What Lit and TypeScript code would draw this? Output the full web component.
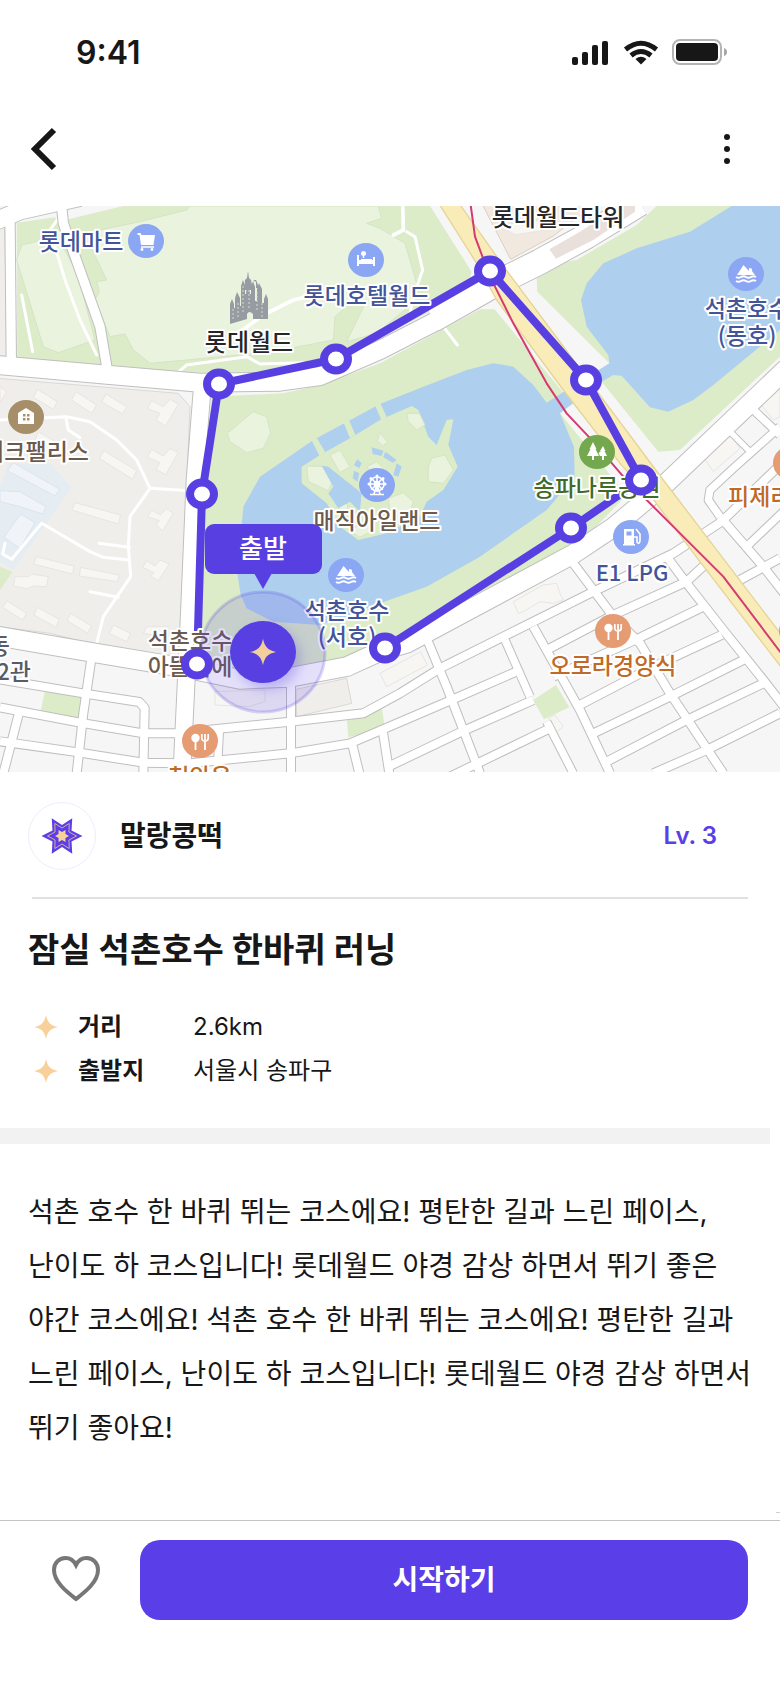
import { LitElement, html, svg, css } from "lit";
import { customElement, property } from "lit/decorators.js";

type Road = [points: string, width: number];
type Label = { x: number; y: number; text: string; kind: string; anchor?: string };
type Pin = { x: number; y: number; kind: string; icon: string };

/* Terrain is drafted on a 3x grid and scaled down by the map group. */
const GREENS = [
  "50,68 165,52 200,130 300,420 318,500 52,472",
  "205,58 370,18 1290,18 1415,215 1405,250 1380,290 1140,412 1010,480 880,512 650,520 540,515 335,496 300,380 205,110",
  "635,590 850,580 960,556 1140,490 1440,328 1484,328 1700,590 1680,640 1880,885 1740,1030 1300,1290 1140,1360 1000,1400 840,1420 595,1430 612,840",
  "1610,235 1670,190 1730,180 1910,75 1970,18 2340,18 2340,470 2040,750 1975,755 1805,545 1828,490 1612,275",
];

const LIGHT_GREENS = [
  "50,180 65,135 150,115 195,150 235,230 285,420 175,458 130,440",
  "570,18 560,30 420,65 300,90 255,105 320,240 290,245 298,275 285,300 330,410 375,402 400,450 450,490 560,480 820,455 1000,420 1005,350 1040,320 1100,300 1040,425 1130,400 1250,300 1250,250 1215,130 1140,85 1100,70 1145,55 1135,18",
  "760,635 800,650 812,700 790,745 740,758 690,725 682,700",
];

const LAKES = [
  "2195,18 2070,95 1910,145 1810,190 1760,250 1743,300 1760,380 1825,465 1828,490 1700,570 1640,608 1600,555 1540,500 1480,490 1400,510 1270,560 1140,612 940,720 780,830 730,920 712,1120 722,1185 740,1225 820,1265 960,1275 1040,1250 1140,1210 1280,1160 1440,1070 1640,930 1724,830 1722,740 1680,640 1805,545 1840,525 1865,527 1950,622 2005,635 2080,600 2140,555 2340,390 2340,18",
];

const ISLANDS = [
  "905,800 960,765 1050,715 1140,660 1235,618 1255,630 1285,710 1310,735 1340,660 1360,658 1345,735 1373,800 1330,870 1280,905 1260,950 1160,1000 1075,1020 1020,980 980,910 905,850",
  "930,712 945,705 975,755 960,770",
  "1030,665 1045,655 1066,705 1050,715",
  "1125,615 1140,608 1160,650 1145,662",
];

const ISLAND_WATER = [
  "965,797 985,800 1085,880 1080,935 1050,905 1015,925 985,880 1000,860",
  "1115,742 1150,752 1145,768 1118,762",
  "1156,755 1190,780 1178,788 1150,772",
  "1072,778 1085,790 1078,805 1062,795",
  "1062,812 1078,820 1072,845 1058,835",
  "1190,790 1205,800 1195,830 1180,825",
];

const ISLAND_PATCHES = [
  "920,798 980,800 995,850 985,872 925,845",
  "990,765 1020,750 1050,800 1020,818",
  "1140,698 1162,725 1150,738 1132,722",
  "1220,640 1258,640 1275,675 1250,690 1225,665",
  "1295,775 1335,765 1360,810 1330,850 1285,845 1285,800",
  "1100,800 1130,785 1150,805 1130,830",
  "1015,915 1040,905 1045,935 1020,955",
  "1165,895 1210,878 1240,905 1225,950 1170,940",
  "1045,990 1110,965 1120,990 1080,1012",
];

const HOUSES = [
  "0,560 20,575 0,608",
  "112,568 172,605 160,628 100,592",
  "228,575 290,615 275,640 215,600",
  "318,582 380,620 368,642 305,606",
  "455,602 490,620 510,598 535,612 497,678 468,660 480,640 442,625",
  "312,752 410,812 398,838 298,775",
  "115,695 175,730 165,750 105,722",
  "455,748 490,768 510,745 535,758 497,824 468,808 480,788 442,772",
  "225,908 362,945 355,972 215,930",
  "455,930 482,945 498,925 520,940 488,992 468,975 478,962 442,950",
  "110,1070 222,1098 218,1122 100,1092",
  "242,1102 358,1125 352,1145 238,1128",
  "440,1082 465,1098 480,1080 508,1092 475,1142 452,1128 462,1118 428,1102",
  "45,1130 85,1130 95,1122 145,1130 140,1160 100,1158 80,1166 40,1158",
  "20,1202 80,1240 68,1260 8,1222",
  "112,1222 178,1258 168,1282 102,1245",
  "212,1240 275,1278 262,1300 202,1262",
  "340,1275 392,1300 380,1325 328,1300",
  "440,1280 505,1280 495,1310 430,1300",
];

const STRUCTURES = [
  "645,1475 795,1470 795,1505 745,1520 645,1515",
  "1140,1420 1262,1355 1282,1395 1160,1460",
  "1540,1205 1630,1155 1670,1150 1680,1180 1690,1200 1660,1210 1620,1205 1570,1235 1555,1240",
  "1645,1555 1665,1545 1690,1580 1668,1598",
  "2110,770 2190,705 2220,745 2140,815",
  "2280,610 2340,560 2340,650 2320,660",
];

const PARKS = [
  "135,1472 245,1490 238,1556 122,1534",
  "1040,1552 1145,1520 1155,1585 1045,1612",
  "1600,1500 1668,1455 1708,1522 1632,1558",
  "0,1100 38,1115 0,1170",
];

const STREETS: Road[] = [
  ["30,60 34,490", 28],
  ["183,0 190,70 300,380 322,510", 28],
  ["-10,62 60,32 240,-8", 52],
  ["0,1438 250,1480 418,1506 434,1524 430,1720", 24],
  ["0,1522 240,1568 430,1600 540,1600", 24],
  ["0,1624 220,1655 430,1688 540,1690", 24],
  ["275,1370 250,1540 230,1720", 24],
  ["58,1535 10,1720", 24],
  ["570,1595 870,1565 1090,1540 1200,1480 1320,1405 1590,1270 1790,1170 2020,1060 2165,965 2340,795", 24],
  ["570,1690 870,1660 1050,1630 1140,1592 1350,1502 1560,1410", 24],
  ["873,1450 873,1720", 24],
  ["658,1590 652,1720", 22],
  ["1056,1630 1078,1720", 24],
  ["1148,1590 1168,1720", 24],
  ["1165,1700 1385,1595 1600,1500", 24],
  ["1340,1735 1660,1580", 24],
  ["1282,1320 1340,1460 1440,1720", 24],
  ["1515,1320 1590,1490", 22],
  ["1640,1565 1720,1720", 22],
  ["1600,1280 1740,1530 1830,1720", 24],
  ["1720,1090 1840,1250 1920,1330 2010,1480 2170,1720", 24],
  ["1640,1350 1840,1245 2060,1145 2130,1080", 24],
  ["1660,1430 1905,1320 2110,1220", 24],
  ["1730,1520 1960,1400 2165,1305", 24],
  ["1770,1605 2010,1490 2230,1380", 24],
  ["1810,1690 2060,1560 2290,1450", 24],
  ["1960,1720 2120,1650 2340,1540", 24],
  ["2000,1070 2060,1150 2170,1290 2290,1440 2360,1530", 24],
  ["2220,1140 2340,1075", 24],
  ["2160,950 2290,1100 2360,1190", 24],
  ["2240,1040 2360,925", 22],
  ["2160,950 2125,900 2130,870 2200,805 2340,680", 22],
  ["2185,690 2250,755", 16],
  ["2250,620 2340,705", 22],
];

const AVENUES: Road[] = [
  ["-20,494 330,525 600,548 840,545 960,528 1140,450 1315,360 1490,250 1620,185 1760,108 1920,10", 54],
  ["1300,358 1490,250 1620,185 1760,108 1920,10", 74],
  ["607,560 585,840 565,1310 545,1730", 50],
  ["-10,1308 280,1358 560,1405 720,1438 870,1432 1040,1400 1150,1350 1220,1330 1720,1062 1840,982 2000,848 2360,505", 56],
];

const PATHS: Road[] = [
  ["150,90 195,240 240,360 290,465", 9],
  ["150,90 175,55", 9],
  ["65,285 98,455", 9],
  ["530,520 560,495 740,470 780,492 910,488", 9],
  ["720,395 790,345 880,300 920,290", 11],
  ["1208,0 1210,90 1180,105", 11],
  ["1220,95 1245,110 1268,210 1240,290 1230,340", 9],
  ["1330,380 1372,435", 9],
  ["0,660 200,650 270,665 350,720 410,780 450,865 390,950 385,1040 392,1130 310,1250 285,1350", 9],
  ["198,655 205,690 240,713", 9],
  ["450,865 570,872", 9],
  ["298,1030 388,1042", 9],
  ["270,1175 355,1192", 9],
  ["388,1080 310,1072 270,1055 125,970 35,1078 8,1062 15,1030", 9],
];

const PINS: Pin[] = [
  { x: 146, y: 241, kind: "blue", icon: "cart" },
  { x: 366, y: 260, kind: "blue", icon: "bed" },
  { x: 26, y: 417, kind: "brown", icon: "house" },
  { x: 377, y: 485, kind: "blue", icon: "wheel" },
  { x: 746, y: 274, kind: "blue", icon: "lake" },
  { x: 597, y: 452, kind: "green", icon: "trees" },
  { x: 346, y: 575, kind: "blue", icon: "lake" },
  { x: 200, y: 741, kind: "orange", icon: "food" },
  { x: 613, y: 631, kind: "orange", icon: "food" },
  { x: 631, y: 537, kind: "blue", icon: "gas" },
  { x: 791, y: 463, kind: "orange", icon: "food" },
  { x: 797, y: 631, kind: "blue", icon: "cart" },
];

const LABELS: Label[] = [
  { x: 81, y: 250, text: "롯데마트", kind: "navy" },
  { x: 249, y: 351, text: "롯데월드", kind: "dark" },
  { x: 367, y: 304, text: "롯데호텔월드", kind: "navy" },
  { x: 558, y: 226, text: "롯데월드타워", kind: "dark" },
  { x: 747, y: 317, text: "석촌호수", kind: "navy" },
  { x: 747, y: 344, text: "(동호)", kind: "navy" },
  { x: 89, y: 460, text: "레이크팰리스", kind: "earth", anchor: "end" },
  { x: 377, y: 529, text: "매직아일랜드", kind: "earth" },
  { x: 347, y: 619, text: "석촌호수", kind: "navy" },
  { x: 347, y: 645, text: "(서호)", kind: "navy" },
  { x: 190, y: 649, text: "석촌호수", kind: "earth" },
  { x: 190, y: 675, text: "아뜰리에", kind: "earth" },
  { x: 597, y: 496, text: "송파나루공원", kind: "forest" },
  { x: 728, y: 505, text: "피제리아", kind: "rust", anchor: "start" },
  { x: 632, y: 581, text: "E1 LPG", kind: "navy latin" },
  { x: 613, y: 674, text: "오로라경양식", kind: "rust" },
  { x: 200, y: 785, text: "천안옥", kind: "rust" },
  { x: 10, y: 654, text: "동", kind: "slate", anchor: "end" },
  { x: 31, y: 680, text: "2관", kind: "slate", anchor: "end" },
];

const ROUTE: [number, number][] = [
  [385, 648], [571, 528], [641, 480], [586, 380], [490, 271],
  [336, 359], [219, 384], [202, 494], [197, 664],
];

const ICONS: Record<string, unknown> = {
  cart: svg`<path d="M-8.500-8h3l1 2H9L7.500 4H-5L-6.500-6h-2z" fill="#fff"/><path d="M-5 6H8" stroke="#fff" stroke-width="1.500"/><circle cx="-4" cy="8.500" r="1.400" fill="#fff"/><circle cx="6" cy="8.500" r="1.400" fill="#fff"/>`,
  bed: svg`<path d="M-9-5h2v5H7v-3h2V6H7V4H-7v2h-2zM-5-1H6v2H-5z" fill="#fff"/><path d="M-2.500-2V-6" stroke="#fff" stroke-width="1.400"/><circle cx="-2.500" cy="-6.500" r="2.500" fill="#fff"/>`,
  house: svg`<path d="M-8 7V-4L0-9l8 5V7z" fill="#fff"/><path d="M-3-3h2.500v2.500H-3zM1-3h2.500v2.500H1zM-3 1h2.500v2.500H-3zM1 1h2.500v2.500H1z" fill="#a58e68"/>`,
  wheel: svg`<g fill="none" stroke="#fff" stroke-width="1.600"><circle cy="-1" r="7"/><circle cy="-1" r="2.500"/><path d="M0-9V7M-8-1H8M-5.700-6.700 5.700 4.700M5.700-6.700-5.700 4.700M-3 9 0-1 3 9M-7 9.500H7"/></g><g fill="#fff"><circle cy="-9" r="1.500"/><circle cx="8" cy="-1" r="1.500"/><circle cx="-8" cy="-1" r="1.500"/><circle cx="6" cy="-6.500" r="1.500"/><circle cx="-6" cy="-6.500" r="1.500"/></g>`,
  lake: svg`<path d="M-9 1-2.500-9 3-3V-6q4 0 3 3l3 4z" fill="#fff"/><path d="M-10 3q2.500 1.500 5 0t5 0 5 0 5 0M-10 7q2.500 1.500 5 0t5 0 5 0 5 0" fill="none" stroke="#fff" stroke-width="2"/>`,
  trees: svg`<path d="M-4-10-.500-3h-1L2 4h-5v4h-2V4h-5l3.500-7h-1zM6-6l2.500 5h-1L10 4H7v4H5V4H3L1.500 1 4-1h-1z" fill="#fff"/>`,
  food: svg`<circle cx="-4.500" cy="-3" r="4.200" fill="#fff"/><path d="M-4.500 0v9M5 0v9" stroke="#fff" stroke-width="1.800"/><path d="M1.800-7v4q0 3 3.200 3t3.200-3v-4M5-7v6" fill="none" stroke="#fff" stroke-width="1.700"/>`,
  gas: svg`<path d="M-7-8H3V7h1v1.500H-8V7h1zM-4.500-5.500v4H.500v-4z" fill="#fff" fill-rule="evenodd"/><path d="M5-8l4 5v7q-1 4-3 1V0H3" fill="none" stroke="#fff" stroke-width="1.600"/>`,
};

const sparkle = "M0-12C1.500-4.500 4.500-1.500 12 0C4.500 1.500 1.500 4.500 0 12C-1.500 4.500-4.500 1.500-12 0C-4.500-1.500-1.500-4.500 0-12Z";

const starPoints = (outer: number, inner: number) =>
  Array.from({ length: 12 }, (_, i) => {
    const r = i % 2 ? inner : outer;
    const a = (i * Math.PI) / 6;
    return `${(r * Math.cos(a)).toFixed(2)},${(r * Math.sin(a)).toFixed(2)}`;
  }).join(" ");

const polys = (list: string[], cls: string) => list.map((p) => svg`<polygon class=${cls} points=${p}></polygon>`);

const roads = (list: Road[], casing: number, cls: string) =>
  list.map(([p, w]) => svg`<polyline class=${cls} points=${p} stroke-width=${w + casing}></polyline>`);

@customElement("course-map")
export class CourseMap extends LitElement {
  static styles = css`
    :host { display: block; }
    svg { display: block; width: 100%; height: auto; }
    .ground { fill: #f6f6f6; }
    .green { fill: #dcebc8; }
    .light { fill: #e9f3dd; stroke: #d6e3c6; stroke-width: 3; }
    .water { fill: #aed0ee; }
    .estate { fill: #efeeeb; stroke: #dcd8d2; stroke-width: 3; }
    .school { fill: #e5edf3; }
    .wing { fill: #f0f4f9; stroke: #dbe3ec; stroke-width: 3; }
    .house { fill: #f7f6f3; stroke: #e8e5e0; stroke-width: 3; }
    .mall { fill: #f1e9df; stroke: #dccfc2; stroke-width: 3; }
    .annex { fill: #e9e0db; }
    .highway { fill: #faecb8; stroke: #e5d498; stroke-width: 4; }
    .casing, .road, .metro { fill: none; stroke-linejoin: round; }
    .casing { stroke: #bfbfbf; }
    .road { stroke: #fff; }
    .path { fill: none; stroke: #fff; stroke-linejoin: round; stroke-linecap: round; }
    .metro { stroke: #d53a70; stroke-width: 6; }
    .castle { fill: #979ba2; }
    .window { fill: none; stroke: #d5dbd3; stroke-width: 1; stroke-dasharray: 2 2; }
    .route { fill: none; stroke: #573fe2; stroke-width: 8; stroke-linejoin: round; }
    .node { fill: #fff; stroke: #573fe2; stroke-width: 8; }
    .halo { fill: #573fe2; fill-opacity: 0.16; stroke: #573fe2; stroke-opacity: 0.22; stroke-width: 3; }
    .shadow { fill: #573fe2; fill-opacity: 0.3; filter: blur(6px); }
    .core, .bubble { fill: #573fe2; }
    .spark { fill: #f2cf9b; }
    .pin-blue { fill: #8ba6f3; }
    .pin-brown { fill: #a58e68; }
    .pin-green { fill: #73a84e; }
    .pin-orange { fill: #e69c72; }
    text {
      font-family: "Noto Sans CJK KR", sans-serif;
      font-size: 23px;
      font-weight: 500;
      text-anchor: middle;
    }
    .label { stroke: #fff; stroke-width: 4px; stroke-linejoin: round; paint-order: stroke; }
    .navy { fill: #43559a; }
    .dark { fill: #26262a; font-size: 24px; }
    .latin { font-size: 22px; }
    .earth { fill: #6d5a4f; }
    .forest { fill: #3f6a28; }
    .rust { fill: #bf6a26; }
    .slate { fill: #565c69; }
    .end { text-anchor: end; }
    .start { text-anchor: start; }
    .bubble-text { font-size: 26px; fill: #fff; }
  `;

  render() {
    return html`
      <svg viewBox="0 206 780 566" role="img" aria-label="석촌호수 러닝 코스 지도">
        <rect class="ground" y="206" width="780" height="566"></rect>
        <g transform="translate(0 200) scale(0.33333)">
          ${polys(GREENS, "green")} ${polys(LIGHT_GREENS, "light")}
          ${polys(LAKES, "water")} ${polys(ISLANDS, "green")}
          ${polys(ISLAND_PATCHES, "light")} ${polys(ISLAND_WATER, "water")}
          <polygon class="estate" points="-5,60 14,85 22,470 -5,468"></polygon>
          <polygon class="estate" points="-5,535 535,580 570,620 538,1375 290,1335 150,1300 -5,1280"></polygon>
          <polygon class="school" points="0,860 25,790 150,790 215,862 40,1110 0,1085"></polygon>
          <polygon class="wing" points="40,788 180,868 165,888 22,812"></polygon>
          <polygon class="wing" points="0,872 60,875 138,920 128,942 60,920 0,905"></polygon>
          <polygon class="wing" points="62,942 105,968 60,1045 12,1012"></polygon>
          ${polys(HOUSES, "house")} ${polys(PARKS, "green")}
          <polygon class="mall" points="1440,0 1532,178 1660,108 1800,0"></polygon>
          <polygon class="house" points="1505,80 1580,60 1645,65 1640,90 1545,104"></polygon>
          <polygon class="estate" points="888,1468 1040,1435 1055,1510 890,1550"></polygon>
          ${polys(STRUCTURES, "house")}
          ${roads(PATHS, 0, "path")}
          ${roads(STREETS, 6, "casing")} ${roads(AVENUES, 6, "casing")}
          ${roads(STREETS, 0, "road")} ${roads(AVENUES, 0, "road")}
          <polygon class="annex" points="1648,148 1740,95 1860,18 1905,18 1905,35 1780,120 1668,176"></polygon>
          <polygon class="highway" points="1310,0 1430,190 1490,300 1690,570 1860,790 1965,905 2090,1072 2350,1410 2350,1312 1990,840 1515,205 1370,0"></polygon>
          <polyline class="metro" points="1410,0 1425,110 1470,230 1540,370 1640,550 1700,640 1780,725 1870,830 1940,900 2050,1010 2170,1130 2350,1368"></polyline>
        </g>
        <path class="castle" d="M230 324v-20l2-5 2 5v4h1v-10l2-6 3 6v8h1v-20l2-6 2 6v8h1l1-8 1-9 1 9 1 8h1v-7l2-6 2 6v14h2v-12l2-6 3 6v14h2v-4l2-5 2 5v20h-15v-5q-4-4-6 0v5z"></path>
        <path class="castle" d="M244 290l1-10 2-2 1-7 1 7 2 2 2 10zM256 288v-6l-3-2h3l1 2 2 6z"></path>
        <path class="window" d="M233 309v12M238 303v15M243 286v28M249 290v18M257 292v20M262 303v15"></path>
        <polyline class="route" points=${ROUTE.map((p) => p.join(",")).join(" ")}></polyline>
        ${PINS.map(
          (p) => svg`<g transform="translate(${p.x} ${p.y})">
            <ellipse class="pin-${p.kind}" rx="18" ry="17"></ellipse>${ICONS[p.icon]}
          </g>`
        )}
        ${LABELS.map(
          (l) => svg`<text class="label ${l.kind} ${l.anchor ?? ""}" x=${l.x} y=${l.y}>${l.text}</text>`
        )}
        <ellipse class="halo" cx="263" cy="652" rx="62" ry="60"></ellipse>
        ${ROUTE.map(([x, y]) => svg`<ellipse class="node" cx=${x} cy=${y} rx="12" ry="11.500"></ellipse>`)}
        <ellipse class="shadow" cx="268" cy="658" rx="32" ry="31"></ellipse>
        <ellipse class="core" cx="263" cy="652" rx="33" ry="31"></ellipse>
        <path class="spark" d=${sparkle} transform="translate(263 652) scale(1.1)"></path>
        <rect class="bubble" x="205" y="524" width="117" height="50" rx="9"></rect>
        <path class="bubble" d="M254 573h18l-9 16z"></path>
        <text class="bubble-text" x="263" y="558">출발</text>
      </svg>
    `;
  }
}

@customElement("course-fact")
export class CourseFact extends LitElement {
  @property() label = "";
  @property() value = "";

  static styles = css`
    :host { display: grid; grid-template-columns: 44px 115px 1fr; align-items: center; line-height: 44px; font-size: 24px; }
    svg { display: block; width: 24px; height: 24px; fill: #f8d19a; }
    .label { font-weight: 600; }
  `;

  render() {
    return html`
      <svg viewBox="-12 -12 24 24" aria-hidden="true"><path d=${sparkle}></path></svg>
      <span class="label">${this.label}</span>
      <span>${this.value}</span>
    `;
  }
}

@customElement("app-root")
export class AppRoot extends LitElement {
  static styles = css`
    :host {
      display: flex;
      flex-direction: column;
      min-height: 100vh;
      background: #fff;
      color: #171717;
      font-family: Inter, "Noto Sans CJK KR", sans-serif;
    }
    button { border: 0; padding: 0; background: none; font: inherit; color: inherit; cursor: pointer; }
    svg { display: block; }
    .status { display: flex; align-items: center; justify-content: space-between; height: 104px; padding: 0 52px 0 76px; box-sizing: border-box; }
    .time { font-size: 32px; font-weight: 600; }
    .nav { display: flex; align-items: center; justify-content: space-between; height: 102px; padding: 0 20px; box-sizing: border-box; }
    .nav button { display: grid; place-items: center; width: 48px; height: 48px; margin-bottom: 12px; }
    .menu { margin-right: 9px; }
    .author { display: flex; align-items: center; gap: 24px; padding: 30px 63px 27px 28px; line-height: 40px; }
    .avatar { display: grid; place-items: center; width: 66px; height: 66px; border: 1px solid #efecfd; border-radius: 50%; }
    .name { flex: 1; font-size: 28px; font-weight: 600; }
    .level { font-size: 24px; font-weight: 600; color: #5a3ee8; }
    .rule { margin: 0 32px; border: 0; border-top: 2px solid #e0e0e0; }
    h1 { margin: 27px 28px 31px; font-size: 34px; font-weight: 700; line-height: 48px; }
    .facts { padding: 0 34px; }
    .band { height: 16px; margin: 35px 10px 0 0; background: #f2f2f2; }
    .about { margin: 41px 28px; font-size: 28px; line-height: 54px; word-break: keep-all; }
    .tick { align-self: flex-end; width: 4px; height: 1px; margin: auto 0 7px; background: #cfcfcf; }
    .actions { display: flex; align-items: center; gap: 40px; padding: 19px 32px 68px 52px; border-top: 1px solid #c4c4c4; }
    .like { flex: none; width: 48px; height: 48px; }
    .start { flex: 1; height: 80px; border-radius: 20px; background: #5a3ee8; color: #fff; font-size: 28px; font-weight: 600; line-height: 40px; }
  `;

  render() {
    return html`
      <header>
        <div class="status">
          <span class="time">9:41</span>
          <svg width="156" height="28" viewBox="572 37 156 28" aria-hidden="true">
            <g fill="#171717">
              <rect x="572" y="56" width="6" height="8" rx="2"></rect>
              <rect x="582" y="51" width="6" height="13" rx="2"></rect>
              <rect x="592" y="44" width="6" height="20" rx="2"></rect>
              <rect x="602" y="40" width="6" height="24" rx="2"></rect>
              <rect x="676" y="42" width="42" height="18" rx="4"></rect>
              <path d="M641 63.500l-5.500-5.500q5.500-4.500 11 0z"></path>
            </g>
            <g fill="none" stroke="#171717" stroke-width="5">
              <path d="M625.500 48.500q15.500-12.500 31 0"></path>
              <path d="M631 54.500q10-8 20 0"></path>
            </g>
            <rect x="673" y="39" width="48" height="24" rx="7" fill="none" stroke="#b4b4b4" stroke-width="2"></rect>
            <path d="M724 47v8q3-1 3-4t-3-4z" fill="#a6a6a6"></path>
          </svg>
        </div>
        <nav class="nav">
          <button aria-label="뒤로">
            <svg width="48" height="48" viewBox="0 0 48 48"><path d="M34 5 15 24l19 19" fill="none" stroke="#171717" stroke-width="6"></path></svg>
          </button>
          <button class="menu" aria-label="더보기">
            <svg width="8" height="32" viewBox="0 0 8 32" fill="#171717">
              <circle cx="4" cy="4" r="3"></circle><circle cx="4" cy="16" r="3"></circle><circle cx="4" cy="28" r="3"></circle>
            </svg>
          </button>
        </nav>
      </header>
      <course-map></course-map>
      <section class="author">
        <div class="avatar">
          <svg width="42" height="42" viewBox="-21 -21 42 42" aria-hidden="true">
            <polygon points=${starPoints(20.5, 11)} fill="#5a3ee8"></polygon>
            <polygon points=${starPoints(14.5, 8)} fill="none" stroke="#d9ac9c" stroke-width="1"></polygon>
            <polygon points=${starPoints(7, 4)} fill="#f8d19a"></polygon>
          </svg>
        </div>
        <span class="name">말랑콩떡</span>
        <span class="level">Lv. 3</span>
      </section>
      <hr class="rule" />
      <h1>잠실 석촌호수 한바퀴 러닝</h1>
      <div class="facts">
        <course-fact label="거리" value="2.6km"></course-fact>
        <course-fact label="출발지" value="서울시 송파구"></course-fact>
      </div>
      <div class="band"></div>
      <p class="about">
        석촌 호수 한 바퀴 뛰는 코스에요! 평탄한 길과 느린 페이스, 난이도 하 코스입니다! 롯데월드 야경 감상 하면서 뛰기 좋은 야간 코스에요! 석촌 호수 한 바퀴 뛰는 코스에요! 평탄한 길과 느린 페이스, 난이도 하 코스입니다! 롯데월드 야경 감상 하면서 뛰기 좋아요!
      </p>
      <div class="tick"></div>
      <footer class="actions">
        <button class="like" aria-label="좋아요">
          <svg width="48" height="48" viewBox="0 0 48 48"><path d="M24 43C15 36 2 26 2 14 2 7 7 2 13.500 2 18 2 22 5 24 9 26 5 30 2 34.500 2 41 2 46 7 46 14 46 26 33 36 24 43Z" fill="none" stroke="#777" stroke-width="4"></path></svg>
        </button>
        <button class="start">시작하기</button>
      </footer>
    `;
  }
}
